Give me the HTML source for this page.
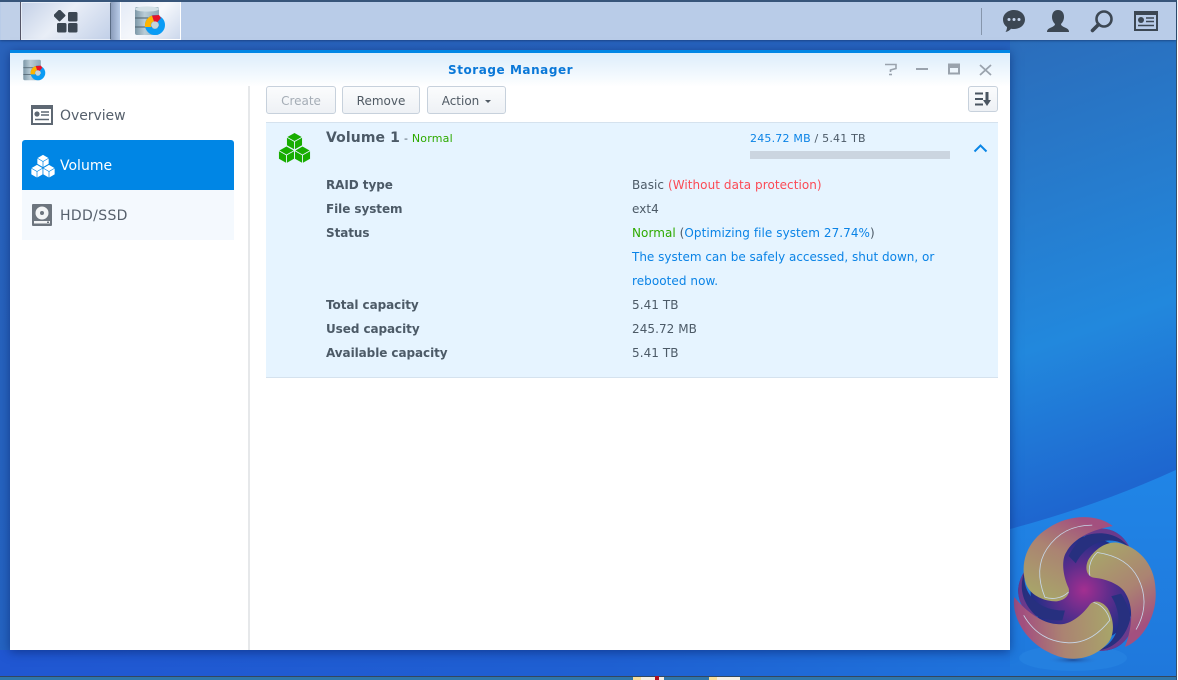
<!DOCTYPE html>
<html><head><meta charset="utf-8"><style>
html,body{margin:0;padding:0}
body{width:1178px;height:680px;overflow:hidden;position:relative;background:#2060d0;font-family:"DejaVu Sans","Liberation Sans",sans-serif;font-size:12px;color:#4c5a67}
.a{position:absolute;white-space:nowrap}
svg{position:absolute;display:block}
.btn{position:absolute;top:86px;height:28px;box-sizing:border-box;border:1px solid #c7d1dc;border-radius:3px;background:linear-gradient(#fbfcfd,#eef1f5);text-align:center;line-height:28px;font-size:12px;color:#505a64}
.l{left:326px;font-weight:bold;color:#4c5a67;letter-spacing:-.07px}
.v{left:632px;letter-spacing:.06px}
.b{color:#0a83e6}
</style></head><body>
<svg style="left:0;top:0" width="1178" height="680">
<defs>
<linearGradient id="bg" x1="0.2" y1="0" x2="1" y2="1"><stop offset="0" stop-color="#2a63bb"/><stop offset="1" stop-color="#1f64c8"/></linearGradient>
<linearGradient id="bg2" gradientUnits="userSpaceOnUse" x1="939" y1="66" x2="1094" y2="499"><stop offset="0" stop-color="#2b6dbb"/><stop offset=".65" stop-color="#2288dd"/><stop offset="1" stop-color="#1e66cf"/></linearGradient>
<linearGradient id="bot" x1="0" y1="0" x2="1" y2="0"><stop offset="0" stop-color="#2057d2"/><stop offset=".6" stop-color="#1f60d2"/><stop offset="1" stop-color="#1f74dc"/></linearGradient>
<linearGradient id="sw" x1="0" y1="0" x2="0" y2="1"><stop offset="0" stop-color="#2085e6"/><stop offset="1" stop-color="#1f78dc"/></linearGradient>
<radialGradient id="core"><stop offset="0" stop-color="#a32f90"/><stop offset=".5" stop-color="#5c2d8c"/><stop offset="1" stop-color="#1d2f86"/></radialGradient>
<linearGradient id="pet" gradientUnits="userSpaceOnUse" x1="-5" y1="-70" x2="-40" y2="5"><stop offset="0" stop-color="#a3507f"/><stop offset=".45" stop-color="#ab8372"/><stop offset="1" stop-color="#a8a36a"/></linearGradient>
<radialGradient id="sh"><stop offset="0" stop-color="#1d4f9d"/><stop offset="1" stop-color="#2a7fdd" stop-opacity="0"/></radialGradient>
<linearGradient id="ic" x1="0" y1="0" x2="1" y2="0"><stop offset="0" stop-color="#7d98a8"/><stop offset=".4" stop-color="#b9ccd6"/><stop offset="1" stop-color="#8ea9b8"/></linearGradient>
<g id="ring"><path d="M-15 -33C0 -62 30 -70 45 -40C30 -54 5 -50 -8 -26Z" fill="#27307f"/><path d="M-5 -50C10 -66 35 -62 45 -40C32 -58 10 -58 -5 -50Z" fill="#6a3a8c"/></g>
<g id="petal"><path d="M28 -62C15 -73 -13 -75 -35 -60C-56 -47 -63 -25 -56 -5C-51 6 -38 11 -27 11C-18 10 -13 4 -15 -2C-21 -15 -22 -30 -17 -37C-10 -50 8 -59 28 -62Z" fill="url(#pet)"/><path d="M-15 2C-22 9 -32 9 -38 7C-44 -8 -46 -25 -36 -40C-26 -55 -12 -63 8 -63" fill="none" stroke="#c8d8ea" stroke-width=".8"/></g>
</defs>
<rect width="1178" height="680" fill="url(#bg)"/>
<rect x="0" y="650" width="1010" height="27" fill="url(#bot)"/>
<rect x="1010" y="40" width="168" height="640" fill="url(#bg2)"/>
<path d="M1010 529Q1100 505 1178 469V676H1010Z" fill="url(#sw)"/>
<ellipse cx="1073" cy="658" rx="54" ry="13" fill="#2480e0"/>
<ellipse cx="1073" cy="660" rx="26" ry="4.500" fill="url(#sh)"/>
<g transform="translate(1084 590) scale(1.03)">
<circle r="52" fill="url(#core)"/>
<use href="#ring"/><use href="#ring" transform="rotate(120)"/><use href="#ring" transform="rotate(240)"/>
<use href="#petal"/><use href="#petal" transform="rotate(120)"/><use href="#petal" transform="rotate(240)"/>
</g>
<rect x="0" y="676" width="1178" height="4" fill="#2f76ab"/>
<rect x="0" y="676" width="1178" height="1" fill="#33475e"/>
<rect x="633" y="677" width="31" height="3" fill="#f4f0e6"/><rect x="633" y="677" width="8" height="3" fill="#f8df9a"/><rect x="655" y="676" width="4" height="4" fill="#b01020"/>
<rect x="709" y="677" width="31" height="3" fill="#f4f0e6"/><rect x="709" y="677" width="8" height="3" fill="#f8df9a"/>
<rect x="1176" y="0" width="1" height="680" fill="#33506e"/>
<rect x="1177" y="0" width="1" height="680" fill="#fff"/>
</svg>

<!-- taskbar -->
<div class="a" style="left:0;top:0;width:1176px;height:40px;background:#b9cce8;border-top:2px solid #37557a;box-sizing:border-box;box-shadow:0 1px 2px rgba(20,50,100,.6)"></div>
<div class="a" style="left:1px;top:2px;width:20px;height:38px;background:#c0d0e8;border-right:1px solid #556;box-sizing:border-box"></div>
<div class="a" style="left:21px;top:2px;width:90px;height:38px;box-sizing:border-box;background:linear-gradient(135deg,#c4d1e7,#e9eef7 45%,#c2d0e8);border:1px solid #e6edf8;border-right-color:#5a6c84"></div>
<div class="a" style="left:111px;top:2px;width:9px;height:38px;background:linear-gradient(90deg,#8b9dbb,#b9cce8)"></div>
<div class="a" style="left:120px;top:2px;width:61px;height:38px;box-sizing:border-box;background:linear-gradient(135deg,#e4ebf6,#f6f8fc 50%,#ccd8ec);border:1px solid #fff;border-top:0;border-left-color:#fff"></div>

<svg style="left:54px;top:10px" width="24" height="23"><rect x="-4.500" y="-4.500" width="9" height="9" rx="1" transform="translate(5.500 5.500) rotate(45)" fill="#3c4753"/><rect x="14" y="2" width="9.500" height="9.500" rx="1.500" fill="#3c4753"/><rect x="3" y="13" width="9.500" height="9.500" rx="1.500" fill="#3c4753"/><rect x="14" y="13" width="9.500" height="9.500" rx="1.500" fill="#3c4753"/></svg>

<svg style="left:135px;top:6px" width="32" height="30" viewBox="0 0 32 30"><rect x="0" y="1" width="24" height="28" rx="2" fill="url(#ic)"/><ellipse cx="12" cy="3" rx="12" ry="2.600" fill="#d3e0e6"/><path d="M0 12H24M0 21H24" stroke="#4c5f6c"/><circle cx="20" cy="19" r="7" fill="none" stroke="#0a9cf5" stroke-width="6"/><path d="M10 21A10.500 10.500 0 0 1 17 9.500L19 15.500A3.500 3.500 0 0 0 16.500 21Z" fill="#ffb400"/><path d="M17 9.500L24 9L26 12L22 16.500L19 15.500Z" fill="#e8132a"/><circle cx="20" cy="19" r="3.600" fill="#c7d4dc"/></svg>

<div class="a" style="left:981px;top:8px;width:1px;height:27px;background:#8696ac"></div>
<svg style="left:1002px;top:9px" width="24" height="24"><path d="M12 1C18 1 23 5 23 10.500C23 16 18 20 12 20C11 20 10 20 9 19.700C8 21 6 22.500 3.500 23C4.500 21.500 5 20 5 18C2.500 16.500 1 13.700 1 10.500C1 5 6 1 12 1Z" fill="#3c4753"/><circle cx="7" cy="10.500" r="1.500" fill="#c5d5ec"/><circle cx="12" cy="10.500" r="1.500" fill="#c5d5ec"/><circle cx="17" cy="10.500" r="1.500" fill="#c5d5ec"/></svg>
<svg style="left:1046px;top:9px" width="24" height="24"><path d="M12 1C16 1 18 4 18 8C18 11 16.500 13.500 15 15C15 17 18 18 20 19C22 20 23 21 23 23H1C1 21 2 20 4 19C6 18 9 17 9 15C7.500 13.500 6 11 6 8C6 4 8 1 12 1Z" fill="#3c4753"/></svg>
<svg style="left:1090px;top:9px" width="24" height="24"><circle cx="14" cy="10" r="7.500" fill="none" stroke="#3c4753" stroke-width="2.600"/><path d="M8.500 15.500L2.500 21.500" stroke="#3c4753" stroke-width="3.600" stroke-linecap="round"/></svg>
<svg style="left:1134px;top:11px" width="24" height="20"><rect x="1" y="1" width="22" height="18" fill="none" stroke="#3c4753" stroke-width="2"/><rect x="1" y="1" width="22" height="3" fill="#3c4753"/><circle cx="7" cy="9" r="3" fill="#3c4753"/><path d="M12 7H20M12 10.500H20M4 14.500H20" stroke="#3c4753" stroke-width="1.500"/></svg>

<!-- window -->
<div class="a" style="left:10px;top:50px;width:1000px;height:600px;background:#fff;box-shadow:0 2px 10px rgba(10,40,110,.65)"></div>
<div class="a" style="left:10px;top:50px;width:1000px;height:3px;background:#0086e5"></div>
<div class="a" style="left:10px;top:53px;width:1000px;height:34px;background:linear-gradient(#dcedfb,#fff)"></div>
<div class="a" style="left:248px;top:86px;width:2px;height:564px;background:#e6e8ea"></div>

<svg style="left:23px;top:59px" width="24" height="22" viewBox="0 0 32 30"><rect x="0" y="1" width="24" height="28" rx="2" fill="url(#ic)"/><path d="M0 12H24M0 21H24" stroke="#4c5f6c"/><circle cx="20" cy="19" r="7" fill="none" stroke="#0a9cf5" stroke-width="6"/><path d="M10 21A10.500 10.500 0 0 1 17 9.500L19 15.500A3.500 3.500 0 0 0 16.500 21Z" fill="#ffb400"/><path d="M17 9.500L24 9L26 12L22 16.500L19 15.500Z" fill="#e8132a"/><circle cx="20" cy="19" r="3.600" fill="#c7d4dc"/></svg>
<div class="a" style="left:448px;top:63px;font-weight:bold;font-size:12px;color:#0a78d8;letter-spacing:.55px">Storage Manager</div>

<svg style="left:880px;top:60px" width="115" height="20" fill="none" stroke="#9aa3ad"><path d="M5 4.500H16V8.500L10.500 10V12" stroke-width="1.600"/><path d="M9 14.500H12" stroke-width="1.600"/><path d="M36 9H48" stroke-width="2"/><rect x="69" y="4.500" width="10" height="9" stroke-width="2"/><path d="M68 6.500H80" stroke-width="3"/><path d="M100 5L111 15M111 5L100 15" stroke-width="1.800"/></svg>

<!-- sidebar -->
<svg style="left:31px;top:105px" width="22" height="20"><rect x="1" y="1" width="20" height="18" fill="none" stroke="#5e6873" stroke-width="2"/><rect x="1" y="1" width="20" height="3" fill="#5e6873"/><circle cx="6" cy="9" r="2.600" fill="#5e6873"/><path d="M10 7H18M10 10H18M4 14.500H18" stroke="#5e6873" stroke-width="1.500"/></svg>
<div class="a" style="left:60px;top:108px;font-size:14px;color:#56606c;letter-spacing:-.05px">Overview</div>
<div class="a" style="left:22px;top:140px;width:212px;height:50px;background:#0086e5;border-radius:3px 3px 0 0"></div>
<div class="a" style="left:22px;top:190px;width:212px;height:50px;background:#f4f9fe"></div>
<svg style="left:31px;top:154px" width="24" height="24" viewBox="0 0 24 24" fill="#fff" stroke="#0086e5" stroke-width=".7"><path d="M12 .5L18 4V10L12 13.500L6 10V4Z"/><path d="M6 4L12 7.500L18 4M12 7.500V13.500" fill="none"/><path d="M6 10.500L12 14V20.500L6 24L0 20.500V14Z"/><path d="M0 14L6 17.500L12 14M6 17.500V24" fill="none"/><path d="M18 10.500L24 14V20.500L18 24L12 20.500V14Z"/><path d="M12 14L18 17.500L24 14M18 17.500V24" fill="none"/></svg>
<div class="a" style="left:60px;top:158px;font-size:14px;color:#fff;letter-spacing:0">Volume</div>
<svg style="left:32px;top:204px" width="20" height="22"><rect width="20" height="22" rx="1" fill="#6d757e"/><circle cx="10" cy="9" r="6.500" fill="#f3f5f6"/><circle cx="10" cy="9" r="2" fill="#6d757e"/><rect x="2" y="17" width="16" height="2.500" fill="#f3f5f6"/><rect x="15" y="17.500" width="2" height="1.500" fill="#6d757e"/></svg>
<div class="a" style="left:60px;top:208px;font-size:14px;color:#56606c;letter-spacing:.35px">HDD/SSD</div>

<!-- toolbar -->
<div class="btn" style="left:266px;width:70px;color:#a5adb6">Create</div>
<div class="btn" style="left:342px;width:78px">Remove</div>
<div class="btn" style="left:427px;width:79px;padding-right:12px">Action</div>
<div class="a" style="left:485px;top:100px;width:0;height:0;border:3.500px solid transparent;border-top:3.500px solid #505a64;border-bottom:0"></div>
<div class="btn" style="left:968px;width:30px;height:26px"></div>
<svg style="left:975px;top:92px" width="16" height="15"><path d="M0 1.500H8M0 7H8M0 12.500H8" stroke="#4a5561" stroke-width="2"/><path d="M12 0V9" stroke="#4a5561" stroke-width="3"/><path d="M8 8H16L12 14Z" fill="#4a5561"/></svg>

<!-- panel -->
<div class="a" style="left:266px;top:122px;width:732px;height:256px;background:#e6f4ff;border-top:1px solid #d5e2ee;border-bottom:1px solid #d5e2ee;box-sizing:border-box"></div>
<svg style="left:278px;top:132px" width="33" height="32" viewBox="0 0 33 32" fill="#18ad00" stroke="#e6f4ff" stroke-width=".9"><path d="M16.500 .5L24.500 5V13.500L16.500 18L8.500 13.500V5Z"/><path d="M8.500 5L16.500 9.500L24.500 5M16.500 9.500V18" fill="none"/><path d="M8.500 14L16.500 18.500V27L8.500 31.500L.5 27V18.500Z"/><path d="M.5 18.500L8.500 23L16.500 18.500M8.500 23V31.500" fill="none"/><path d="M24.500 14L32.500 18.500V27L24.500 31.500L16.500 27V18.500Z"/><path d="M16.500 18.500L24.500 23L32.500 18.500M24.500 23V31.500" fill="none"/></svg>
<div class="a" style="left:326px;top:130px;font-size:14px;font-weight:bold;color:#4c5a67;letter-spacing:.1px">Volume 1</div>
<div class="a" style="left:404px;top:132px;font-size:11px;letter-spacing:.2px"><span>-</span> <span style="color:#2eaa00">Normal</span></div>
<div class="a" style="left:750px;top:132px;font-size:11px;letter-spacing:.2px"><span class="b">245.72 MB</span> / 5.41 TB</div>
<div class="a" style="left:750px;top:151px;width:200px;height:8px;background:#cbd5e0"></div>
<svg style="left:973px;top:143px" width="15" height="10"><path d="M1.500 8.500L7.500 2.500L13.500 8.500" fill="none" stroke="#0a86e6" stroke-width="2"/></svg>

<div class="a l" style="top:178px">RAID type</div>
<div class="a l" style="top:202px">File system</div>
<div class="a l" style="top:226px">Status</div>
<div class="a l" style="top:298px">Total capacity</div>
<div class="a l" style="top:322px">Used capacity</div>
<div class="a l" style="top:346px">Available capacity</div>

<div class="a v" style="top:178px">Basic <span style="color:#fb4a55">(Without data protection)</span></div>
<div class="a v" style="top:202px">ext4</div>
<div class="a v" style="top:226px"><span style="color:#2eaa00">Normal</span> (<span class="b">Optimizing file system 27.74%</span>)</div>
<div class="a v b" style="top:250px;letter-spacing:0">The system can be safely accessed, shut down, or</div>
<div class="a v b" style="top:274px">rebooted now.</div>
<div class="a v" style="top:298px">5.41 TB</div>
<div class="a v" style="top:322px">245.72 MB</div>
<div class="a v" style="top:346px">5.41 TB</div>
</body></html>
